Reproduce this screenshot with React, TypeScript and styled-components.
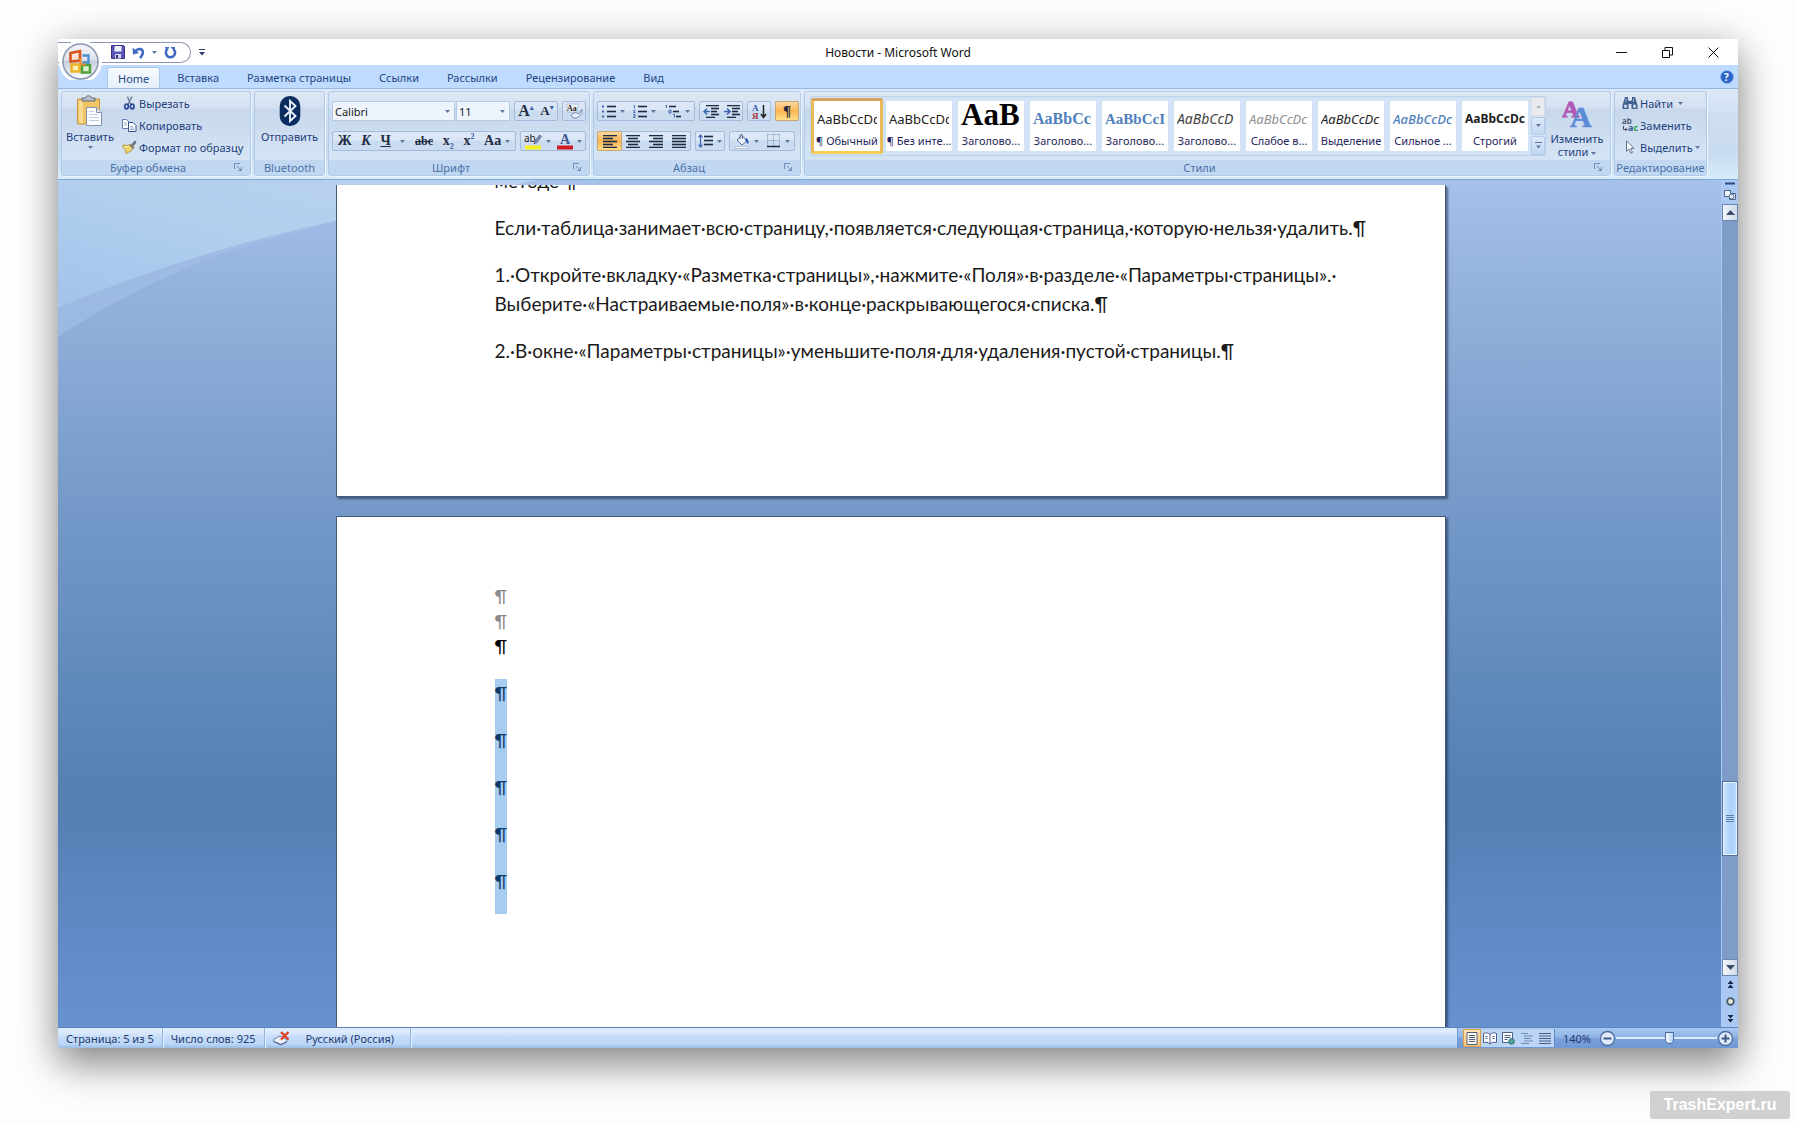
import React from "react";
import styled, { createGlobalStyle, css } from "styled-components";

const ui = `"Noto Sans", "Open Sans", sans-serif`;
const serif = `"Liberation Serif", "DejaVu Serif", serif`;
const ink = "#1d3f7c";

const Global = createGlobalStyle`
  * { box-sizing: border-box; }
  body { margin: 0; background: #fdfdfd; font-family: ${ui}; font-size: 11px; color: ${ink}; }
  button, select, input { font: inherit; color: inherit; margin: 0; }
  button { background: none; border: 0; padding: 0; cursor: default; }
  svg { display: block; flex: none; }
`;

/* ---------- shell ---------- */
const Desktop = styled.div`
  height: 100vh;
  min-height: 600px;
  padding: 39px 58px 0;
  display: flex;
  flex-direction: column;
  overflow: hidden;
`;
const AppWindow = styled.main`
  flex: 1;
  min-height: 0;
  display: flex;
  flex-direction: column;
  background: #fff;
  box-shadow: 0 18px 36px rgba(0, 0, 0, 0.4), 0 0 36px rgba(0, 0, 0, 0.14);
`;
const PageFooter = styled.footer`
  height: 76px;
  flex: none;
  margin-right: -52px;
  padding-bottom: 5px;
  display: flex;
  justify-content: flex-end;
  align-items: flex-end;
`;
const Watermark = styled.span`
  position: relative;
  width: 140px;
  text-align: center;
  border-radius: 2px;
  background: #d0d0d0;
  color: #fff;
  font: bold 16px/28px "Liberation Sans", Arial, sans-serif;
`;

/* ---------- title bar ---------- */
const TitleBar = styled.header`
  height: 26px;
  flex: none;
  display: grid;
  grid-template-columns: 1fr auto 1fr;
  align-items: center;
  background: #fff;
`;
const QuickAccess = styled.div`
  display: flex;
  align-items: center;
`;
const Pill = styled.div`
  width: 133px;
  height: 21px;
  margin-right: 8px;
  padding-left: 53px;
  display: flex;
  align-items: center;
  gap: 7px;
  border: 1px solid #8c93b5;
  border-left: 0;
  border-radius: 0 11px 11px 0;
  background: #fff;
`;
const OfficeButton = styled.button`
  position: absolute;
  left: 62px;
  top: 43px;
  width: 37px;
  height: 37px;
  z-index: 2;
  border-radius: 50%;
  box-shadow: 0 0 0 3px #fff;
  clip-path: inset(-4px -4px 0 -4px);
`;
const Title = styled.h1`
  margin: 0;
  font-size: 12px;
  font-weight: 400;
  color: #111;
`;
const WindowButtons = styled.div`
  display: flex;
  justify-content: flex-end;
  padding-right: 2px;
`;
const WindowButton = styled.button`
  width: 46px;
  height: 26px;
  display: grid;
  place-items: center;
`;

/* ---------- tabs ---------- */
const TabRow = styled.nav`
  height: 23px;
  flex: none;
  display: flex;
  align-items: stretch;
  padding: 0 4px 0 49px;
  background: #bfdbff;
`;
const Tab = styled.button<{ $active?: boolean }>`
  padding: 2px 14px 0;
  color: #24457f;
  ${(p) =>
    p.$active &&
    css`
      padding: 0 10px 1px;
      margin: 2px 3px -1px 0;
      border: 1px solid #a9c8ee;
      border-bottom: 0;
      border-radius: 3px 3px 0 0;
      background: linear-gradient(#f7fbff, #e3eefb);
    `}
`;
const HelpButton = styled.button`
  margin-left: auto;
`;

/* ---------- ribbon ---------- */
const Ribbon = styled.section`
  flex: none;
  display: flex;
  gap: 3px;
  height: 92px;
  padding: 2px 31px 3px 3px;
  border-top: 1px solid #93b8e6;
  border-bottom: 1px solid #7fa9d6;
  background: linear-gradient(#dce9f8 0, #cfdff2 30%, #c9dbf0 70%, #d6ecfa 100%);
`;
const Group = styled.section<{ $w?: number }>`
  ${(p) => (p.$w ? `width: ${p.$w}px; flex: none;` : `flex: 1; min-width: 0;`)}
  display: flex;
  flex-direction: column;
  border: 1px solid #b0cbea;
  border-radius: 3px;
  background: linear-gradient(#dde8f5 0, #d5e1f1 18%, #c8d8ec 22%, #d9e8f8 100%);
  box-shadow: 1px 1px 0 #ecf5fd;
`;
const GroupBody = styled.div<{ $pad?: string }>`
  flex: 1;
  min-height: 0;
  display: flex;
  padding: ${(p) => p.$pad || "0"};
`;
const GroupLabel = styled.div`
  height: 15px;
  flex: none;
  display: flex;
  align-items: center;
  background: #c1d8f0;
  color: #4a70ab;
  line-height: 15px;
  white-space: nowrap;
  & > span { flex: 1; text-align: center; }
  & > button { width: 16px; }
`;
const BigButton = styled.button<{ $w: number }>`
  width: ${(p) => p.$w}px;
  flex: none;
  display: flex;
  flex-direction: column;
  align-items: center;
  justify-content: flex-start;
  padding-top: 3px;
  gap: 3px;
  line-height: 13px;
`;
const InlineCaret = styled.span`
  display: inline-block;
  vertical-align: middle;
`;
const SmallStack = styled.div<{ $left: number }>`
  display: flex;
  flex-direction: column;
  padding-left: ${(p) => p.$left}px;
`;
const SmallButton = styled.button`
  height: 22px;
  display: flex;
  align-items: center;
  gap: 2px;
  white-space: nowrap;
`;
const Rows = styled.div`
  flex: 1;
  display: flex;
  flex-direction: column;
  gap: 10px;
`;
const Row = styled.div<{ $gap?: number }>`
  display: flex;
  gap: ${(p) => p.$gap ?? 4}px;
  height: 20px;
`;
const Cluster = styled.div<{ $w: number }>`
  width: ${(p) => p.$w}px;
  display: flex;
  border: 1px solid #a3bcdb;
  border-radius: 2px;
  background: linear-gradient(#dbe7f6 0 45%, #cbdcf0 50% 100%);
`;
const Tool = styled.button<{ $on?: boolean }>`
  flex: 1 1 auto;
  min-width: 0;
  display: flex;
  align-items: center;
  justify-content: center;
  gap: 4px;
  color: #222c44;
  ${(p) =>
    p.$on &&
    css`
      background: linear-gradient(#fbd8a0, #fdb552 50%, #ffe08a);
      box-shadow: 0 0 0 1px #c8a56c;
      border-radius: 1px;
    `}
`;
const Glyph = styled.span<{ $italic?: boolean; $deco?: string; $size?: number }>`
  font-family: ${serif};
  font-weight: 700;
  font-size: ${(p) => p.$size || 14}px;
  line-height: 16px;
  font-style: ${(p) => (p.$italic ? "italic" : "normal")};
  text-decoration: ${(p) => p.$deco || "none"};
  & sub, & sup { font-size: 8px; line-height: 0; color: #3b62a5; }
`;
const Combo = styled.div<{ $w: number }>`
  width: ${(p) => p.$w}px;
  display: flex;
  align-items: center;
  padding-right: 4px;
  border: 1px solid #b3c9e4;
  background: #eef4fb;
`;
const Select = styled.select`
  flex: 1;
  min-width: 0;
  height: 18px;
  padding: 0 2px;
  border: 0;
  appearance: none;
  background: none;
  color: #222;
`;

/* ---------- styles gallery ---------- */
const Gallery = styled.div`
  display: flex;
  flex: none;
  height: 60px;
  border: 1px solid #bcd1ea;
  border-radius: 2px;
  background: #d3e3f6;
`;
const StyleItem = styled.button<{ $on?: boolean }>`
  width: 72px;
  height: 56px;
  margin-top: 1px;
  border: 3px solid transparent;
  border-radius: 2px;
  ${(p) => p.$on && `border-color: #d3a064 #e9ba5c #f3cf58;`}
`;
const Tile = styled.span`
  display: grid;
  grid-template-rows: 33px 17px;
  height: 50px;
  background: #fff;
  overflow: hidden;
`;
const Sample = styled.span<{ $css?: string }>`
  margin: 0 3px;
  overflow: hidden;
  white-space: nowrap;
  text-align: left;
  font-size: 13px;
  line-height: 36px;
  color: #222;
  ${(p) => p.$css}
`;
const StyleName = styled.span`
  white-space: nowrap;
  font-size: 11px;
  line-height: 14px;
  color: #1f1f5c;
`;
const GalleryNav = styled.div`
  width: 14px;
  display: grid;
  grid-template-rows: repeat(3, 1fr);
  gap: 1px;
`;
const GalleryNavButton = styled.button<{ $off?: boolean }>`
  display: grid;
  place-items: center;
  border-radius: 2px;
  border: 1px solid ${(p) => (p.$off ? "#d9dde4" : "#b4cbe8")};
  background: ${(p) => (p.$off ? "#e9ebee" : "linear-gradient(#dbe9f9, #c3d8f2)")};
`;

/* ---------- workspace ---------- */
const Workspace = styled.section`
  position: relative;
  flex: 1;
  min-height: 0;
  display: grid;
  grid-template-columns: minmax(0, 1fr) 17px;
  background: linear-gradient(#a6c1ea 0, #98b4e0 10%, #8cabd7 20%, #7c9fcd 32%, #7197c6 42%, #5480b4 72%, #5480b4 75%, #5e88c2 86%, #6692d0 100%);
`;
const Swoosh = styled.svg`
  position: absolute;
  left: 0;
  top: 0;
`;
const Canvas = styled.div`
  position: relative;
  overflow: hidden;
  padding: 5px 0 0 2px;
  display: flex;
  flex-direction: column;
  align-items: center;
  gap: 19px;
`;
const Sheet = styled.article<{ $h?: number }>`
  width: 1110px;
  max-width: 100%;
  ${(p) => (p.$h ? `height: ${p.$h}px; flex: none; justify-content: flex-end; padding: 0 90px 131px 158px;` : `flex: 1; padding: 67px 90px 0 158px;`)}
  display: flex;
  flex-direction: column;
  align-items: flex-start;
  overflow: hidden;
  background: #fff;
  border: solid #46597a;
  border-width: ${(p) => (p.$h ? "0 1px 1px" : "1px 1px 0")};
  box-shadow: 2px 2px 2px rgba(30, 45, 75, 0.6);
  font: 19px/29px Lato, Carlito, "Noto Sans", sans-serif;
  color: #1a1a1a;
`;
const Para = styled.p`
  margin: 0 0 18px;
  white-space: nowrap;
  &:last-child { margin-bottom: 0; }
`;
const Mark = styled.p<{ $muted?: boolean }>`
  margin: 0;
  font-size: 18px;
  line-height: 25px;
  color: ${(p) => (p.$muted ? "#8a8a8a" : "#000")};
`;
const Selection = styled.div`
  margin-top: 20px;
  width: 12px;
  background: #a6cdf0;
  color: #0d3a66;
  font-size: 18px;
  & > p { margin: 0; padding-bottom: 18px; }
`;

/* ---------- scroll bar ---------- */
const ScrollColumn = styled.aside`
  display: flex;
  flex-direction: column;
  border-left: 1px solid #a9c9f2;
  background: #7f9cc9;
`;
const ScrollTools = styled.div<{ $h: number }>`
  height: ${(p) => p.$h}px;
  flex: none;
  display: flex;
  flex-direction: column;
  align-items: center;
  justify-content: space-around;
  background: #a9c8f3;
`;
const ScrollArrow = styled.button`
  height: 17px;
  flex: none;
  display: grid;
  place-items: center;
  border: 1px solid #6d87b3;
  background: linear-gradient(90deg, #f4f7fb, #cfd9e8);
`;
const Track = styled.div`
  flex: 1;
  display: grid;
  grid-template-rows: 561fr 75fr 103fr;
`;
const Thumb = styled.div`
  grid-row: 2;
  display: grid;
  place-items: center;
  border: 1px solid #56719f;
  box-shadow: inset 0 0 0 1px #e6f3ff;
  background: linear-gradient(90deg, #cfe6ff, #a7d0fa 60%, #c3e0ff);
`;

/* ---------- status bar ---------- */
const StatusBar = styled.footer`
  height: 21px;
  flex: none;
  display: flex;
  border-top: 1px solid #5e83b8;
  background: linear-gradient(#dcebfd 0 20%, #c6dcf9 45%, #bcd6f7 80%, #9dbde4 100%);
  color: #1f3a6e;
`;
const StatusItem = styled.div<{ $pad?: string }>`
  display: flex;
  align-items: center;
  padding: ${(p) => p.$pad || "0 8px"};
  border-right: 1px solid #8fb1de;
  box-shadow: 1px 0 0 #e6f1ff;
  gap: 16px;
`;
const StatusRight = styled.div`
  margin-left: auto;
  width: 281px;
  padding: 0 4px 0 5px;
  display: flex;
  align-items: center;
  border-left: 1px solid #7598cb;
  background: linear-gradient(#a9c9f3 0, #8fb3e4 45%, #79a0d8 55%, #7098d2 100%);
`;
const Views = styled.div`
  width: 92px;
  height: 18px;
  display: grid;
  grid-template-columns: repeat(5, 1fr);
  border-right: 1px solid #5f86c0;
`;
const ViewButton = styled.button<{ $on?: boolean }>`
  display: grid;
  place-items: center;
  background: ${(p) => (p.$on ? "linear-gradient(#fbe0b0, #f8c877)" : "#bcd5f5")};
  ${(p) => p.$on && `border: 1px solid #dd9c4c;`}
`;
const ZoomValue = styled.button`
  width: 44px;
  text-align: center;
`;
const ZoomRange = styled.input`
  flex: 1;
  min-width: 0;
  height: 16px;
  appearance: none;
  background: linear-gradient(#dcebfd, #dcebfd) center / 100% 2px no-repeat;
  &::-webkit-slider-thumb {
    appearance: none;
    width: 9px;
    height: 12px;
    border: 1px solid #4d6b9c;
    border-radius: 1px 1px 5px 5px;
    background: linear-gradient(90deg, #f5faff, #b9d4f6);
  }
`;
const RoundButton = styled.button`
  width: 17px;
  flex: none;
`;

/* ---------- icons ---------- */
const Caret = ({ up, color = "#5d779f" }: { up?: boolean; color?: string }) => (
  <svg width="5" height="3" viewBox="0 0 5 3" aria-hidden>
    <path d={up ? "M0 3h5L2.500 0z" : "M0 0h5L2.500 3z"} fill={color} />
  </svg>
);
const Launcher = () => (
  <svg width="9" height="9" viewBox="0 0 9 9" fill="none" stroke="#6c8cbc" aria-hidden>
    <path d="M.5 6V.5H6M3 3l4 4M7.500 4v3.500H4" />
  </svg>
);
const OfficeLogo = () => (
  <svg width="37" height="37" viewBox="0 0 37 37" aria-hidden>
    <defs>
      <linearGradient id="orb" x1="0" y1="0" x2="0" y2="1">
        <stop offset="0" stopColor="#f4f5f9" />
        <stop offset=".45" stopColor="#dfe3ec" />
        <stop offset=".5" stopColor="#c6cfdd" />
        <stop offset="1" stopColor="#fff" />
      </linearGradient>
    </defs>
    <circle cx="18.500" cy="18.500" r="17.500" fill="url(#orb)" stroke="#8d99b0" strokeWidth="1.500" />
    <path d="M8.500 10l9.500-2v9.500l-9.500 1z" fill="#f7e3d6" stroke="#d9531e" strokeWidth="2.600" />
    <path d="M20.500 12.500h6v7h-6" fill="none" stroke="#4d90cf" strokeWidth="2.400" />
    <path d="M9.500 21.500h8v7h-8z" fill="#fff0b5" stroke="#efb52a" strokeWidth="2.600" />
    <path d="M20 22h8v7.500h-8z" fill="#d9efce" stroke="#4ea13c" strokeWidth="2.600" />
    <path d="M18.500 15v6.500h5" stroke="#f08a2c" strokeWidth="2" fill="none" />
  </svg>
);
const SaveIcon = () => (
  <svg width="14" height="14" viewBox="0 0 14 14" aria-hidden>
    <path d="M.5.5h12l1 1v12H.5z" fill="#5b55b5" stroke="#373088" />
    <path d="M3.500 1h7v5.500h-7z" fill="#eef1fb" />
    <path d="M4 9h6v4.500H4z" fill="#d5d9ef" />
    <path d="M5 10h2v3H5z" fill="#2f2a78" />
  </svg>
);
const UndoIcon = () => (
  <svg width="13" height="13" viewBox="0 0 13 13" fill="none" aria-hidden>
    <path d="M3 6C6 1.500 11.500 2.500 10.800 7c-.3 2-1.300 3.500-2.800 5" stroke="#3f68c0" strokeWidth="2.600" />
    <path d="M.5 1.500l.5 7L7 7z" fill="#3f68c0" />
  </svg>
);
const RedoIcon = () => (
  <svg width="13" height="13" viewBox="0 0 13 13" fill="none" aria-hidden>
    <path d="M3.500 2.500C.5 6 2 11.300 6.500 11.300c4.300 0 6-5 3-8" stroke="#3f68c0" strokeWidth="2.500" />
    <path d="M6.500 1H11v5z" fill="#3f68c0" />
    <path d="M1 1.800h4" stroke="#3f68c0" strokeWidth="1.500" />
  </svg>
);
const PasteIcon = () => (
  <svg width="28" height="32" viewBox="0 0 28 32" aria-hidden>
    <path d="M1.500 4h22v25h-22z" fill="#f1c465" stroke="#c8954a" />
    <path d="M3 6h4v22H3z" fill="#f9dc94" />
    <path d="M6 6V3h3.500c.5-3 5.500-3 6 0H19v3z" fill="#b9bfca" stroke="#5f6675" />
    <path d="M10.500 12.500h10l5 5v13h-15z" fill="#fbfcff" stroke="#8393b0" />
    <path d="M20.500 12.500v5h5" fill="#dfe6f2" stroke="#8393b0" />
    <path d="M13 19.500h9M13 22.500h10M13 25.500h10M13 16.500h5" stroke="#c5cee0" />
  </svg>
);
const CutIcon = () => (
  <svg width="15" height="14" viewBox="0 0 14 14" fill="none" aria-hidden>
    <path d="M5 .5l3.200 8M9.500.5L5.500 8.500" stroke="#6b7d9c" strokeWidth="1.400" />
    <ellipse cx="4" cy="10.500" rx="1.800" ry="2.300" stroke="#27489a" strokeWidth="1.700" />
    <ellipse cx="9.700" cy="10.500" rx="1.800" ry="2.300" stroke="#27489a" strokeWidth="1.700" />
  </svg>
);
const CopyIcon = () => (
  <svg width="15" height="13" viewBox="0 0 15 13" aria-hidden>
    <path d="M.5.5h4l2.500 2.500v6.500H.5z" fill="#fff" stroke="#5f7bb0" />
    <path d="M6.500 3.500h4.500l3 3v6H6.500z" fill="#fff" stroke="#35508c" />
    <path d="M8 7.500h3M8 9h4.500M8 10.500h4.500M2 4h3M2 6h3" stroke="#7f9bd0" strokeWidth=".8" />
  </svg>
);
const BrushIcon = () => (
  <svg width="15" height="14" viewBox="0 0 15 14" aria-hidden>
    <path d="M9 5l4-4.500 1.500 1.500L11 7z" fill="#5f6675" />
    <path d="M1 5l4 .5L9.500 4l2.500 3.500L9 11l-5 2.500C3 11 4 9 .5 7z" fill="#efd26a" stroke="#a88c3c" strokeWidth=".8" />
    <path d="M8 4.500l3.500 4" stroke="#6d7690" strokeWidth="1.800" />
    <path d="M3 7l3.500-.5" stroke="#fff3bd" />
  </svg>
);
const BluetoothIcon = () => (
  <svg width="22" height="32" viewBox="0 0 22 32" aria-hidden>
    <rect x=".7" y="1" width="20.600" height="30" rx="10" fill="#0b2c5f" />
    <path d="M5.500 10.500l11 10.500-5.500 5V6l5.500 5-11 10.500" fill="none" stroke="#e9f1fb" strokeWidth="1.900" />
  </svg>
);
const lines = (rows: [number, number, number][], color = "#1d2b45") =>
  rows.map(([x1, x2, y], i) => <path key={i} d={`M${x1} ${y}.5H${x2}`} stroke={color} strokeWidth="1.600" />);
const AlignIcon = ({ kind }: { kind: "l" | "c" | "r" | "j" }) => {
  const [a, b] = { l: [0, 10], c: [2, 12], r: [4, 14], j: [0, 14] }[kind];
  return (
    <svg width="14" height="13" viewBox="0 0 14 13" aria-hidden>
      {lines([[0, 14, 0], [a, b, 3], [0, 14, 6], [a, b, 9], [0, 14, 12]])}
    </svg>
  );
};
const BulletsIcon = () => (
  <svg width="14" height="13" viewBox="0 0 14 13" aria-hidden>
    {lines([[5, 14, 1], [5, 14, 6], [5, 14, 11]])}
    <path d="M0 .5h2v2H0zM0 5.500h2v2H0zM0 10.500h2v2H0z" fill="#4468b0" />
  </svg>
);
const NumbersIcon = () => (
  <svg width="14" height="13" viewBox="0 0 14 13" aria-hidden>
    {lines([[5, 14, 1], [5, 14, 6], [5, 14, 11]])}
    <path d="M.5.5h1v3M0 5.500h2L.5 7.500H2.500M0 9.500h2v3H0M.5 11h1.500" fill="none" stroke="#4468b0" strokeWidth=".9" />
  </svg>
);
const MultiIcon = () => (
  <svg width="16" height="13" viewBox="0 0 16 13" aria-hidden>
    {lines([[4, 11, 1], [8, 14, 6], [11, 16, 11]])}
    <path d="M.5 0h1v3M4 5h2v3H4zM8 9.500h1.500v3" fill="none" stroke="#4468b0" />
  </svg>
);
const IndentIcon = ({ out }: { out?: boolean }) => (
  <svg width="16" height="13" viewBox="0 0 16 13" aria-hidden>
    {lines([[3, 16, 0], [8, 16, 3], [8, 14, 6], [8, 16, 9], [3, 12, 12]])}
    <path d={out ? "M7 6.500H1M4 3.500l-3 3 3 3" : "M0 6.500h6M3 3.500l3 3-3 3"} fill="none" stroke="#3d63b0" strokeWidth="1.500" />
  </svg>
);
const SortIcon = () => (
  <svg width="15" height="15" viewBox="0 0 15 15" aria-hidden>
    <text x="0" y="7" fontFamily="Liberation Serif" fontWeight="700" fontSize="9" fill="#2f55a5">А</text>
    <text x="0" y="15" fontFamily="Liberation Serif" fontWeight="700" fontSize="9" fill="#a5333d">Я</text>
    <path d="M11.500 1v12M9 10l2.500 3.500L14 10" fill="none" stroke="#222" strokeWidth="1.500" />
  </svg>
);
const SpacingIcon = () => (
  <svg width="15" height="14" viewBox="0 0 15 14" aria-hidden>
    {lines([[6, 15, 2], [6, 15, 6], [6, 15, 10]])}
    <path d="M2.500 1v12M.5 3.500l2-2.500 2 2.500M.5 10.500l2 2.500 2-2.500" fill="none" stroke="#3d63b0" strokeWidth="1.200" />
  </svg>
);
const BucketIcon = () => (
  <svg width="16" height="15" viewBox="0 0 16 15" aria-hidden>
    <path d="M3 6l5-4.500L13 7l-5 4z" fill="#eef3fb" stroke="#5d6f92" />
    <path d="M6 5V1.500C6 0 8.500 0 8.500 1.500V5" fill="none" stroke="#5d6f92" />
    <path d="M12 4c3 1.500 3 4 2 6.500-1-1-1.500-3-3-4z" fill="#3560b8" />
    <path d="M1 12.500h13v2H1z" fill="#fff" stroke="#93a5c4" strokeWidth=".6" />
  </svg>
);
const BordersIcon = () => (
  <svg width="14" height="14" viewBox="0 0 14 14" fill="none" aria-hidden>
    <path d="M.5.5h12M.5 6.500h12M.5.5v12M6.500.5v12M12.500.5v12" stroke="#7f93b5" strokeDasharray="1 1" />
    <path d="M0 12.500h13" stroke="#1f2c4a" strokeWidth="1.500" />
  </svg>
);
const ClearIcon = () => (
  <svg width="17" height="16" viewBox="0 0 17 16" aria-hidden>
    <rect x="1" y="1" width="11" height="8" fill="#f4f7fc" stroke="#9aacca" strokeWidth=".7" />
    <text x="1" y="8" fontFamily="Liberation Serif" fontWeight="700" fontSize="8" fill="#222">Aa</text>
    <path d="M5 12l4-2.500 4 1.500L16 6v4.500L11 15H7z" fill="#eaeffa" stroke="#6d80a8" strokeWidth=".9" />
  </svg>
);
const HighlightIcon = () => (
  <svg width="18" height="17" viewBox="0 0 18 17" aria-hidden>
    <text x="0" y="9" fontFamily="Noto Sans" fontSize="10" fill="#222">ab</text>
    <path d="M10 11l1-3 4.500-6 2 1.500L13 9.500z" fill="#7d90b5" stroke="#4a5878" strokeWidth=".7" />
    <path d="M1 12.500h16V16.500H1z" fill="#f4f025" />
  </svg>
);
const FontColorIcon = () => (
  <svg width="16" height="17" viewBox="0 0 16 17" aria-hidden>
    <text x="3" y="11" fontFamily="Liberation Serif" fontWeight="700" fontSize="14" fill="#3a5590">A</text>
    <path d="M0 12.500h16V16.500H0z" fill="#cf1b22" />
  </svg>
);
const ChangeStylesIcon = () => (
  <svg width="30" height="30" viewBox="0 0 30 30" aria-hidden>
    <text x="0" y="18" fontFamily="Liberation Serif" fontWeight="700" fontSize="24" fill="#b058b8" stroke="#b058b8">A</text>
    <text x="8" y="28" fontFamily="Liberation Serif" fontWeight="700" fontSize="30" fill="#5b8bd6" stroke="#5b8bd6" strokeWidth=".6">A</text>
  </svg>
);
const FindIcon = () => (
  <svg width="16" height="14" viewBox="0 0 16 14" aria-hidden>
    <path d="M3 1h3v3l1.500 1h1L10 4V1h3l2.500 8v4H9.500V8h-3v5H.5V9z" fill="#43618f" />
    <path d="M2.500 9h2v2.500h-2zM11.500 9h2v2.500h-2zM4 2.500V6M11.500 2.500V6" fill="#dbe7f6" stroke="#b9cdec" strokeWidth=".8" />
  </svg>
);
const ReplaceIcon = () => (
  <svg width="16" height="14" viewBox="0 0 16 14" aria-hidden>
    <text x="0" y="6" fontFamily="Noto Sans" fontWeight="600" fontSize="8" fill="#3b4b66">ab</text>
    <text x="6" y="13" fontFamily="Noto Sans" fontWeight="700" fontSize="9" fill="#2c5e8e">
      a<tspan fill="#2f9a4d">c</tspan>
    </text>
    <path d="M1.500 8v3.500H5M3.500 10L5 11.500 3.500 13" fill="none" stroke="#3b4b66" />
  </svg>
);
const CursorIcon = () => (
  <svg width="16" height="14" viewBox="0 0 16 14" aria-hidden>
    <path d="M4.500.8v10.500l2.500-2.300 1.800 4.200 1.700-.8-1.800-4h3.300z" fill="#fdfeff" stroke="#66738f" />
  </svg>
);
const HelpIcon = () => (
  <svg width="14" height="14" viewBox="0 0 14 14" aria-hidden>
    <circle cx="7" cy="7" r="6.500" fill="#2d63c8" stroke="#8db4ea" />
    <text x="4" y="11" fontFamily="Noto Sans" fontWeight="700" fontSize="10" fill="#fff">?</text>
  </svg>
);
const ProofIcon = () => (
  <svg width="17" height="15" viewBox="0 0 17 15" aria-hidden>
    <path d="M.5 8.500L7 5l7 3.500v2L8 14l-7.500-3.500z" fill="#e9eefa" stroke="#7083ac" />
    <path d="M1 10.500L8 13.500l6-3" stroke="#44598a" fill="none" />
    <path d="M8 1l7.500 7.500M15.500 1L8 8.500" stroke="#dc4325" strokeWidth="2.400" />
  </svg>
);
const ZoomSign = ({ plus }: { plus?: boolean }) => (
  <svg width="17" height="17" viewBox="0 0 17 17" fill="none" aria-hidden>
    <circle cx="8.500" cy="8.500" r="7" fill="#dfebfb" stroke="#4b6a9f" strokeWidth="1.300" />
    <path d={plus ? "M4.500 8.500h8M8.500 4.500v8" : "M4.500 8.500h8"} stroke="#3c5684" strokeWidth="2" />
  </svg>
);
const ViewIcon = ({ kind }: { kind: number }) => (
  <svg width="14" height="13" viewBox="0 0 14 13" fill="none" stroke="#4a5f8c" aria-hidden>
    {kind === 0 && <path d="M2 .5h10v12H2zM4 3.500h6M4 5.500h6M4 7.500h6M4 9.500h6" fill="#fff8e6" />}
    {kind === 1 && <path d="M.5 1.500c2-1 4.500-1 6.500 1 2-2 4.500-2 6.500-1v9c-2-.5-4.500-.5-6.500 1.500-2-2-4.500-2-6.500-1.500zM7 2.500V12M2.500 4.500h2M2.500 6.500h2M9.500 4.500h2M9.500 6.500h2" fill="#fff" />}
    {kind === 2 && (
      <>
        <path d="M1.500.5h10v10h-10zM3.500 3.500h6M3.500 5.500h6M3.500 7.500h3" fill="#fff" />
        <circle cx="10.500" cy="9.500" r="2.800" fill="#57a58c" stroke="#2f6b8c" />
      </>
    )}
    {kind === 3 && <path d="M1 1.500h7M4 4h9M4 6.500h7M4 9h9M1 11.500h8" stroke="#6f8ab8" />}
    {kind === 4 && <path d="M1 1.500h12M1 4h12M1 6.500h12M1 9h12M1 11.500h12" />}
  </svg>
);

/* ---------- data ---------- */
const tabs = ["Home", "Вставка", "Разметка страницы", "Ссылки", "Рассылки", "Рецензирование", "Вид"];
const blueSerif = `font-family: ${serif}; font-weight: 700; color: #4f81bd;`;
const gallery: { name: string; text: string; css?: string }[] = [
  { name: "¶ Обычный", text: "AaBbCcDc" },
  { name: "¶ Без инте...", text: "AaBbCcDc" },
  { name: "Заголово...", text: "AaB", css: `font-family: ${serif}; font-weight: 700; font-size: 31px; line-height: 28px; color: #000;` },
  { name: "Заголово...", text: "AaBbCc", css: `${blueSerif} font-size: 16px;` },
  { name: "Заголово...", text: "AaBbCcI", css: `${blueSerif} font-size: 15px;` },
  { name: "Заголово...", text: "AaBbCcD", css: "font-style: italic; color: #444; font-size: 14px;" },
  { name: "Слабое в...", text: "AaBbCcDc", css: "font-style: italic; color: #8f8f8f;" },
  { name: "Выделение", text: "AaBbCcDc", css: "font-style: italic;" },
  { name: "Сильное ...", text: "AaBbCcDc", css: "font-style: italic; font-weight: 500; color: #4f81bd;" },
  { name: "Строгий", text: "AaBbCcDc", css: "font-weight: 700; font-size: 12px;" },
];
const paragraphs: string[][] = [
  ["методе·¶"],
  ["Если·таблица·занимает·всю·страницу,·появляется·следующая·страница,·которую·нельзя·удалить.¶"],
  ["1.·Откройте·вкладку·«Разметка·страницы»,·нажмите·«Поля»·в·разделе·«Параметры·страницы».·", "Выберите·«Настраиваемые·поля»·в·конце·раскрывающегося·списка.¶"],
  ["2.·В·окне·«Параметры·страницы»·уменьшите·поля·для·удаления·пустой·страницы.¶"],
];

const Labelled = ({ w, label, pad, launcher, children }: { w?: number; label: string; pad?: string; launcher?: boolean; children: React.ReactNode }) => (
  <Group $w={w} aria-label={label}>
    <GroupBody $pad={pad}>{children}</GroupBody>
    <GroupLabel>
      <span>{label}</span>
      {launcher && (
        <button aria-label={`${label}: параметры`}>
          <Launcher />
        </button>
      )}
    </GroupLabel>
  </Group>
);

export default function App() {
  return (
    <Desktop>
      <Global />
      <AppWindow>
        <TitleBar>
          <QuickAccess>
            <OfficeButton aria-label="Office">
              <OfficeLogo />
            </OfficeButton>
            <Pill>
              <button aria-label="Сохранить"><SaveIcon /></button>
              <button aria-label="Отменить"><UndoIcon /></button>
              <Caret />
              <button aria-label="Повторить"><RedoIcon /></button>
            </Pill>
            <button aria-label="Настройка панели">
              <svg width="6" height="7" viewBox="0 0 6 7" aria-hidden>
                <path d="M0 .5h6" stroke="#2b3f74" />
                <path d="M0 3h6L3 6.500z" fill="#2b3f74" />
              </svg>
            </button>
          </QuickAccess>
          <Title>Новости - Microsoft Word</Title>
          <WindowButtons>
            <WindowButton aria-label="Свернуть">
              <svg width="11" height="11" viewBox="0 0 11 11" stroke="#111" aria-hidden><path d="M0 5.500h11" /></svg>
            </WindowButton>
            <WindowButton aria-label="Восстановить">
              <svg width="11" height="11" viewBox="0 0 11 11" stroke="#111" fill="none" aria-hidden><path d="M.5 3.500h7v7h-7zM3 3V.5h7.500V8H8" /></svg>
            </WindowButton>
            <WindowButton aria-label="Закрыть">
              <svg width="11" height="11" viewBox="0 0 11 11" stroke="#111" aria-hidden><path d="M.5.5l10 10M10.500.5l-10 10" /></svg>
            </WindowButton>
          </WindowButtons>
        </TitleBar>

        <TabRow>
          {tabs.map((t, i) => (
            <Tab key={t} $active={i === 0}>{t}</Tab>
          ))}
          <HelpButton aria-label="Справка"><HelpIcon /></HelpButton>
        </TabRow>

        <Ribbon>
          <Labelled w={190} label="Буфер обмена" launcher>
            <BigButton $w={56}>
              <PasteIcon />
              Вставить
              <Caret />
            </BigButton>
            <SmallStack $left={4}>
              <SmallButton><CutIcon />Вырезать</SmallButton>
              <SmallButton><CopyIcon />Копировать</SmallButton>
              <SmallButton><BrushIcon />Формат по образцу</SmallButton>
            </SmallStack>
          </Labelled>

          <Labelled w={71} label="Bluetooth">
            <BigButton $w={69}>
              <BluetoothIcon />
              Отправить
            </BigButton>
          </Labelled>

          <Labelled w={262} label="Шрифт" pad="9px 3px 0" launcher>
            <Rows>
              <Row>
                <Row $gap={1}>
                  <Combo $w={123}>
                    <Select aria-label="Шрифт"><option>Calibri</option></Select>
                    <Caret />
                  </Combo>
                  <Combo $w={54}>
                    <Select aria-label="Размер шрифта"><option>11</option></Select>
                    <Caret />
                  </Combo>
                </Row>
                <Cluster $w={44}>
                  <Tool aria-label="Увеличить размер"><Glyph $size={16}>A<sup>▴</sup></Glyph></Tool>
                  <Tool aria-label="Уменьшить размер"><Glyph $size={13}>A<sup>▾</sup></Glyph></Tool>
                </Cluster>
                <Cluster $w={24}>
                  <Tool aria-label="Очистить формат"><ClearIcon /></Tool>
                </Cluster>
              </Row>
              <Row>
                <Cluster $w={184}>
                  <Tool><Glyph>Ж</Glyph></Tool>
                  <Tool><Glyph $italic>К</Glyph></Tool>
                  <Tool><Glyph $deco="underline">Ч</Glyph></Tool>
                  <Tool aria-label="Вид подчёркивания"><Caret /></Tool>
                  <Tool><Glyph $size={12} $deco="line-through">abc</Glyph></Tool>
                  <Tool><Glyph>x<sub>2</sub></Glyph></Tool>
                  <Tool><Glyph>x<sup>2</sup></Glyph></Tool>
                  <Tool><Glyph>Aa</Glyph><Caret /></Tool>
                </Cluster>
                <Cluster $w={66}>
                  <Tool aria-label="Цвет выделения"><HighlightIcon /><Caret /></Tool>
                  <Tool aria-label="Цвет текста"><FontColorIcon /><Caret /></Tool>
                </Cluster>
              </Row>
            </Rows>
          </Labelled>

          <Labelled w={208} label="Абзац" pad="9px 3px 0" launcher>
            <Rows>
              <Row>
                <Cluster $w={98}>
                  <Tool aria-label="Маркеры"><BulletsIcon /><Caret /></Tool>
                  <Tool aria-label="Нумерация"><NumbersIcon /><Caret /></Tool>
                  <Tool aria-label="Многоуровневый список"><MultiIcon /><Caret /></Tool>
                </Cluster>
                <Cluster $w={44}>
                  <Tool aria-label="Уменьшить отступ"><IndentIcon out /></Tool>
                  <Tool aria-label="Увеличить отступ"><IndentIcon /></Tool>
                </Cluster>
                <Cluster $w={24}>
                  <Tool aria-label="Сортировка"><SortIcon /></Tool>
                </Cluster>
                <Cluster $w={24}>
                  <Tool $on><Glyph $size={15}>¶</Glyph></Tool>
                </Cluster>
              </Row>
              <Row>
                <Cluster $w={94}>
                  <Tool $on aria-label="По левому краю"><AlignIcon kind="l" /></Tool>
                  <Tool aria-label="По центру"><AlignIcon kind="c" /></Tool>
                  <Tool aria-label="По правому краю"><AlignIcon kind="r" /></Tool>
                  <Tool aria-label="По ширине"><AlignIcon kind="j" /></Tool>
                </Cluster>
                <Cluster $w={30}>
                  <Tool aria-label="Интервал"><SpacingIcon /><Caret /></Tool>
                </Cluster>
                <Cluster $w={66}>
                  <Tool aria-label="Заливка"><BucketIcon /><Caret /></Tool>
                  <Tool aria-label="Границы"><BordersIcon /><Caret /></Tool>
                </Cluster>
              </Row>
            </Rows>
          </Labelled>

          <Labelled label="Стили" pad="4px 0 0 5px" launcher>
            <Gallery>
              {gallery.map((g, i) => (
                <StyleItem key={i} $on={i === 0}>
                  <Tile>
                    <Sample $css={g.css}>{g.text}</Sample>
                    <StyleName>{g.name}</StyleName>
                  </Tile>
                </StyleItem>
              ))}
              <GalleryNav>
                <GalleryNavButton $off aria-label="Вверх"><Caret up color="#b3b8c2" /></GalleryNavButton>
                <GalleryNavButton aria-label="Вниз"><Caret /></GalleryNavButton>
                <GalleryNavButton aria-label="Все стили">
                  <svg width="7" height="7" viewBox="0 0 7 7" aria-hidden>
                    <path d="M0 .5h7" stroke="#5d779f" />
                    <path d="M1 3.500h5L3.500 6.500z" fill="#5d779f" />
                  </svg>
                </GalleryNavButton>
              </GalleryNav>
            </Gallery>
            <BigButton $w={62}>
              <ChangeStylesIcon />
              <span>
                Изменить<br />стили <InlineCaret><Caret /></InlineCaret>
              </span>
            </BigButton>
          </Labelled>

          <Labelled w={93} label="Редактирование">
            <SmallStack $left={7}>
              <SmallButton><FindIcon />Найти&nbsp;<Caret /></SmallButton>
              <SmallButton><ReplaceIcon />Заменить</SmallButton>
              <SmallButton><CursorIcon />Выделить<Caret /></SmallButton>
            </SmallStack>
          </Labelled>
        </Ribbon>

        <Workspace>
          <Swoosh width="480" height="170" viewBox="0 0 480 170" aria-hidden>
            <defs>
              <linearGradient id="sky" x1="0" y1="1" x2="1" y2="0">
                <stop offset="0" stopColor="#a3c3ea" />
                <stop offset=".5" stopColor="#b2cfee" />
                <stop offset="1" stopColor="#bcd0f0" />
              </linearGradient>
            </defs>
            <path d="M0 157Q70 110 165 73L290 38V0H0z" fill="#a3bfe6" opacity=".6" />
            <path d="M0 128Q130 72 290 38L480 0H0z" fill="url(#sky)" />
          </Swoosh>
          <Canvas>
            <Sheet $h={312}>
              {paragraphs.map((p, i) => (
                <Para key={i}>
                  {p.map((line, j) => (
                    <React.Fragment key={j}>
                      {j > 0 && <br />}
                      {line}
                    </React.Fragment>
                  ))}
                </Para>
              ))}
            </Sheet>
            <Sheet>
              <Mark $muted>¶</Mark>
              <Mark $muted>¶</Mark>
              <Mark>¶</Mark>
              <Selection>
                {[0, 1, 2, 3, 4].map((i) => (
                  <p key={i}>¶</p>
                ))}
              </Selection>
            </Sheet>
          </Canvas>
          <ScrollColumn>
            <ScrollTools $h={24}>
              <svg width="14" height="22" viewBox="0 0 14 22" aria-hidden>
                <path d="M2 2.500h10" stroke="#2f4a7c" strokeWidth="2" />
                <path d="M1.500 9.500h6v3h5v6h-6v-3h-5z" fill="#f2f6fc" stroke="#4d6288" />
                <circle cx="8.500" cy="15.500" r="2.500" fill="#dfe8f5" stroke="#4d6288" />
              </svg>
            </ScrollTools>
            <ScrollArrow aria-label="Прокрутить вверх">
              <svg width="9" height="5" viewBox="0 0 9 5" aria-hidden><path d="M0 5h9L4.500 0z" fill="#3d4c6c" /></svg>
            </ScrollArrow>
            <Track>
              <Thumb>
                <svg width="8" height="8" viewBox="0 0 8 8" stroke="#5f7dab" aria-hidden><path d="M0 .5h8M0 2.500h8M0 4.500h8M0 6.500h8" /></svg>
              </Thumb>
            </Track>
            <ScrollArrow aria-label="Прокрутить вниз">
              <svg width="9" height="5" viewBox="0 0 9 5" aria-hidden><path d="M0 0h9L4.500 5z" fill="#3d4c6c" /></svg>
            </ScrollArrow>
            <ScrollTools $h={51}>
              <button aria-label="Предыдущая страница">
                <svg width="7" height="8" viewBox="0 0 7 8" aria-hidden><path d="M.5 4h6L3.500.5zM.5 8h6L3.500 4.500z" fill="#16233f" /></svg>
              </button>
              <button aria-label="Объект перехода">
                <svg width="9" height="9" viewBox="0 0 9 9" aria-hidden><circle cx="4.500" cy="4.500" r="3.300" fill="#e3e9d9" stroke="#4d5866" strokeWidth="1.800" /></svg>
              </button>
              <button aria-label="Следующая страница">
                <svg width="7" height="8" viewBox="0 0 7 8" aria-hidden><path d="M.5 0h6L3.500 3.500zM.5 4h6L3.500 7.500z" fill="#16233f" /></svg>
              </button>
            </ScrollTools>
          </ScrollColumn>
        </Workspace>

        <StatusBar>
          <StatusItem>Страница: 5 из 5</StatusItem>
          <StatusItem>Число слов: 925</StatusItem>
          <StatusItem $pad="0 16px 0 8px"><ProofIcon />Русский (Россия)</StatusItem>
          <StatusRight>
            <Views>
              {[0, 1, 2, 3, 4].map((k) => (
                <ViewButton key={k} $on={k === 0} aria-label={`Режим ${k + 1}`}><ViewIcon kind={k} /></ViewButton>
              ))}
            </Views>
            <ZoomValue>140%</ZoomValue>
            <RoundButton aria-label="Уменьшить"><ZoomSign /></RoundButton>
            <ZoomRange type="range" min="0" max="100" defaultValue="53" aria-label="Масштаб" />
            <RoundButton aria-label="Увеличить"><ZoomSign plus /></RoundButton>
          </StatusRight>
        </StatusBar>
      </AppWindow>
      <PageFooter>
        <Watermark>TrashExpert.ru</Watermark>
      </PageFooter>
    </Desktop>
  );
}
